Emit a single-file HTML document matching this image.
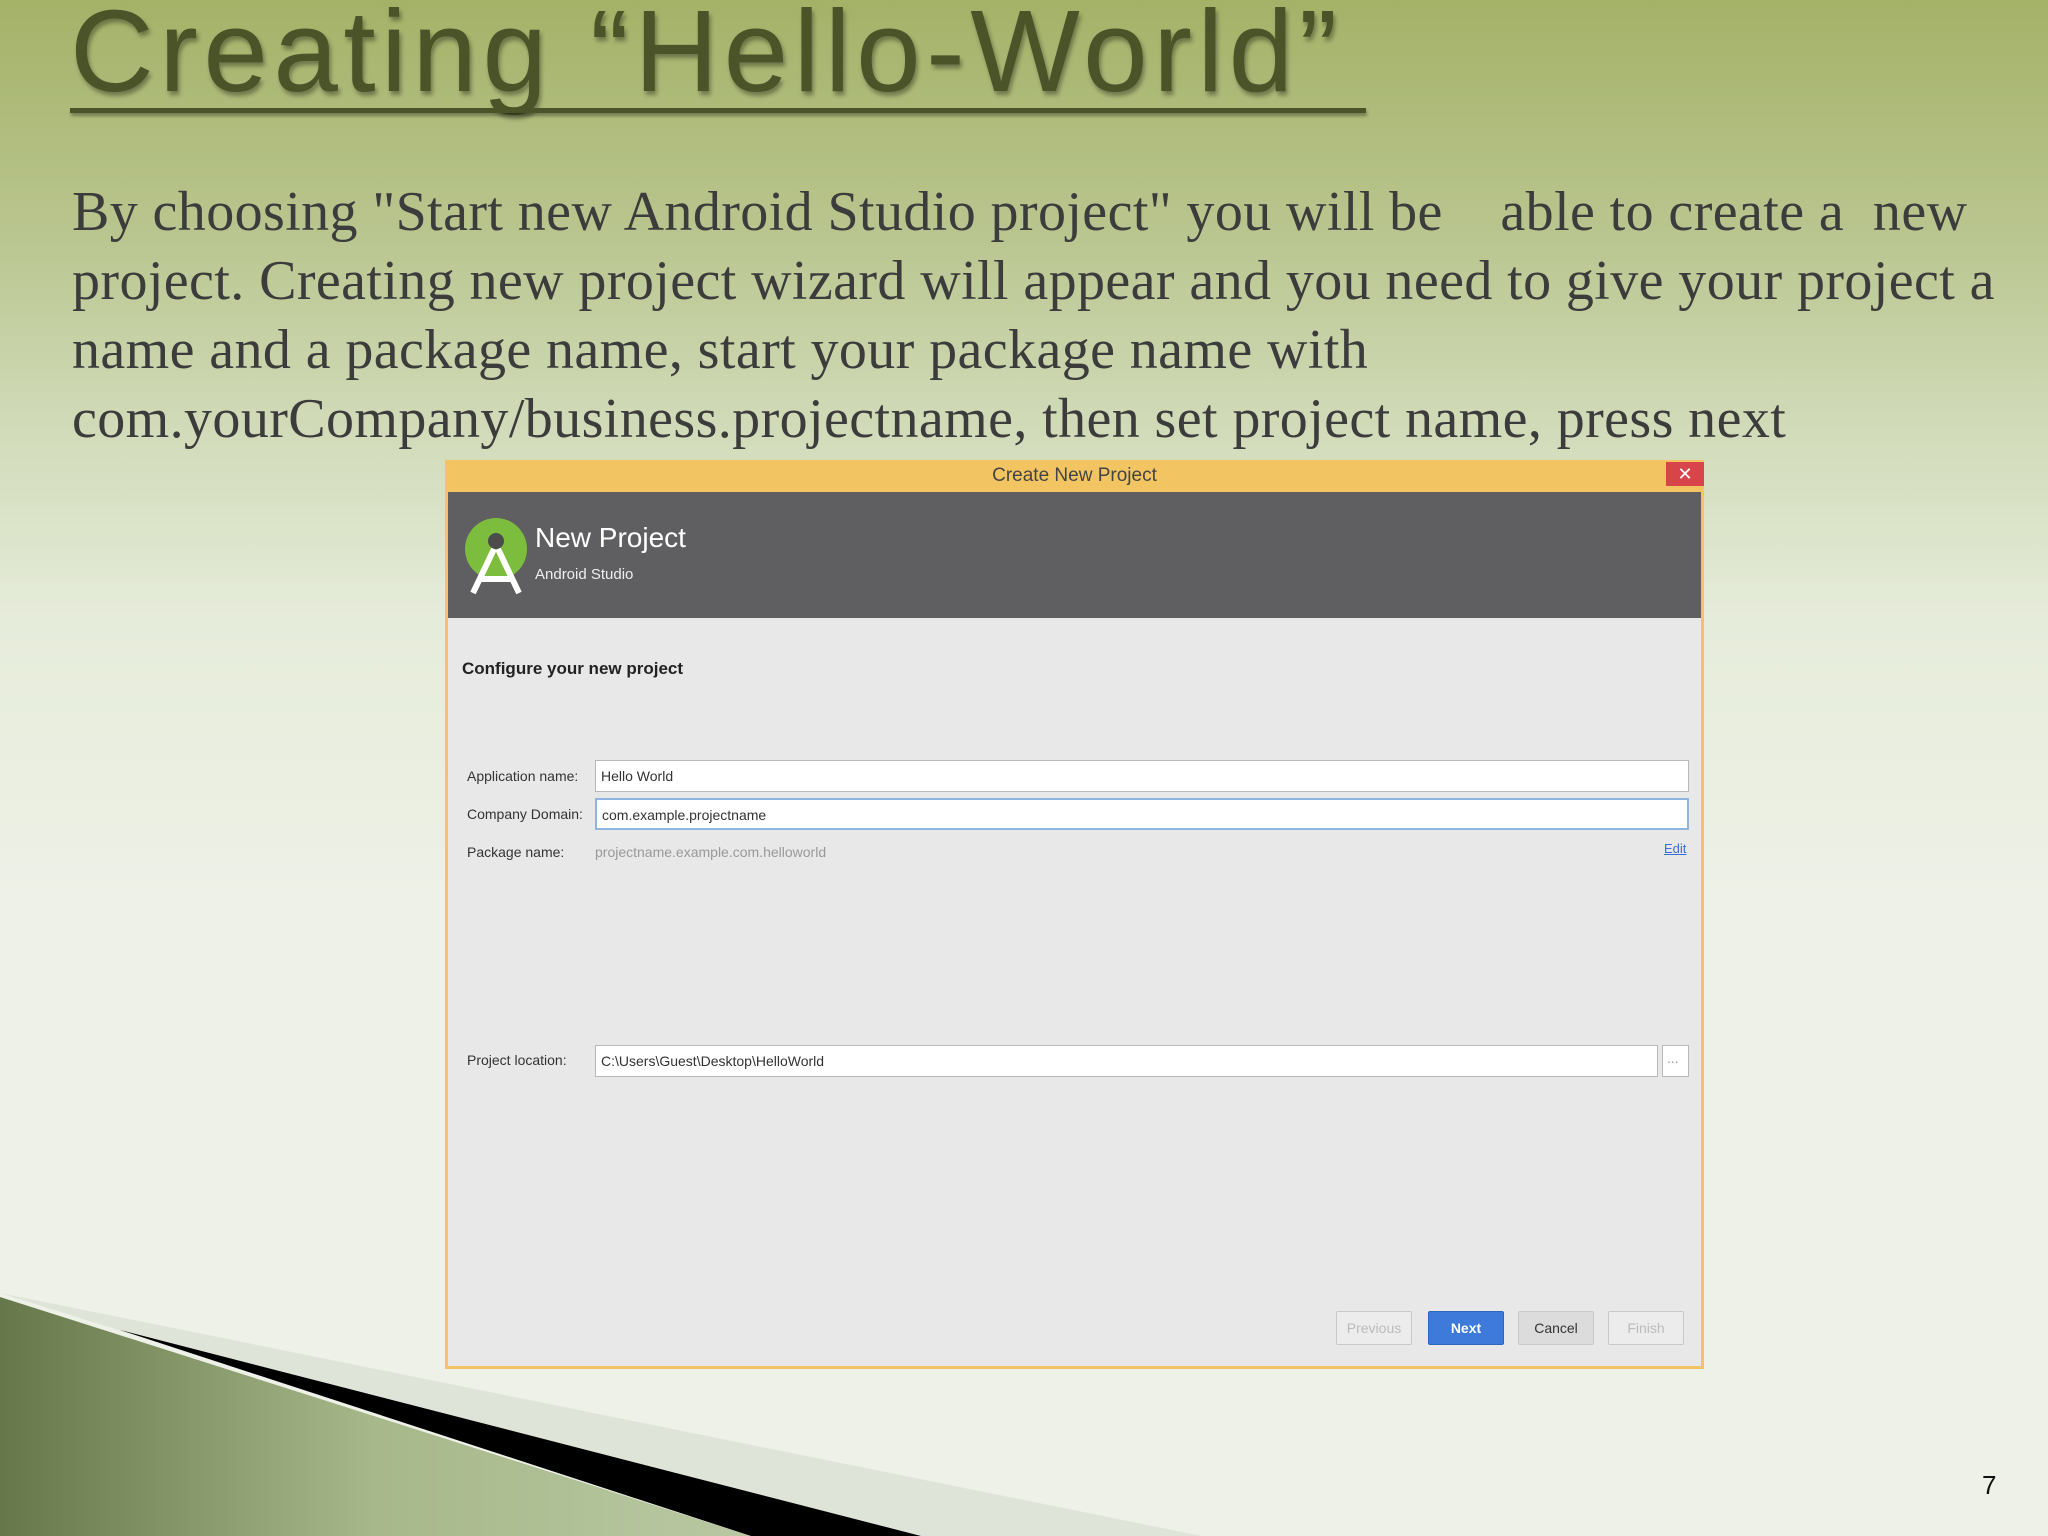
<!DOCTYPE html>
<html><head><meta charset="utf-8"><style>
*{margin:0;padding:0;box-sizing:border-box}
body{width:2048px;height:1536px;overflow:hidden;position:relative;
background:linear-gradient(180deg,#a4b268 0px,#b9c58e 230px,#d0dab7 420px,#e6ecda 620px,#eef1e7 900px,#eef1e8 1536px);font-family:"Liberation Sans",sans-serif}
.title{position:absolute;left:70px;top:-16px;font-family:"Liberation Sans",sans-serif;font-size:116px;color:#4a5428;letter-spacing:5.5px;text-shadow:2px 4px 4px rgba(0,0,0,.35);white-space:nowrap}
.uline{position:absolute;left:70px;top:108px;width:1296px;height:5px;background:#4a5428;box-shadow:1px 3px 3px rgba(0,0,0,.35)}
.body{position:absolute;left:72px;top:178px;font-family:"Liberation Serif",serif;font-size:56px;letter-spacing:0.4px;line-height:69px;color:#3c3c3c;white-space:nowrap}
.dlg{position:absolute;left:445px;top:460px;width:1259px;height:909px;background:#e8e8e8;border:3px solid #f3c462;border-top:none}
.tb{position:absolute;left:-3px;top:0;width:1259px;height:32px;background:#f3c462}
.tb span{position:absolute;left:0;right:0;text-align:center;top:5px;font-size:19px;color:#444}
.cls{position:absolute;right:0;top:2px;width:38px;height:24px;background:#d9434a;color:#fff;text-align:center;font-size:18px;line-height:24px}
.hd{position:absolute;left:0;top:32px;right:0;height:126px;background:#5f5f61}
.lbl{position:absolute;font-size:14px;color:#333}
.fld{position:absolute;left:147px;height:32px;background:#fff;border:1px solid #b8b8b8;font-size:14px;color:#333;padding:7px 5px}
.btn{position:absolute;top:851px;width:76px;height:34px;border:1px solid #c8c8c8;background:#ececec;font-size:14px;color:#bbb;text-align:center;line-height:32px;border-radius:2px}
</style></head><body>
<div class="title">Creating “Hello-World”</div>
<div class="uline"></div>
<div class="body">By choosing "Start new Android Studio project" you will be &nbsp;&nbsp; able to create a &nbsp;new<br>project. Creating new project wizard will appear and you need to give your project a<br>name and a package name, start your package name with<br>com.yourCompany/business.projectname, then set project name, press next</div>

<div class="dlg">
 <div class="tb"><span>Create New Project</span><div class="cls">✕</div></div>
 <div class="hd">
  <svg style="position:absolute;left:17px;top:25px" width="66" height="78" viewBox="0 0 66 78"><circle cx="31" cy="32" r="31" fill="#7cbd3e"/><circle cx="31" cy="24" r="8" fill="#4c4c4c"/><path d="M8 76 L29 32 M54 76 L33 32 M14 62 L48 62" stroke="#fff" stroke-width="6" fill="none"/></svg>
  <div style="position:absolute;left:87px;top:30px;font-size:28px;color:#fff">New Project</div>
  <div style="position:absolute;left:87px;top:74px;font-size:15px;color:#eee">Android Studio</div>
 </div>
 <div style="position:absolute;left:14px;top:199px;font-size:17px;font-weight:bold;color:#222">Configure your new project</div>
 <div class="lbl" style="left:19px;top:308px">Application name:</div>
 <div class="fld" style="top:300px;width:1094px">Hello World</div>
 <div class="lbl" style="left:19px;top:346px">Company Domain:</div>
 <div class="fld" style="top:338px;width:1094px;border:2px solid #8fb4de">com.example.projectname</div>
 <div class="lbl" style="left:19px;top:384px">Package name:</div>
 <div class="lbl" style="left:147px;top:384px;color:#999">projectname.example.com.helloworld</div>
 <div class="lbl" style="left:1216px;top:381px;color:#3a6fd8;font-size:13px;text-decoration:underline">Edit</div>
 <div class="lbl" style="left:19px;top:592px">Project location:</div>
 <div class="fld" style="top:585px;width:1063px">C:\Users\Guest\Desktop\HelloWorld</div>
 <div class="fld" style="top:585px;left:1214px;width:27px;color:#999;padding:4px">...</div>
 <div class="btn" style="left:888px">Previous</div>
 <div class="btn" style="left:980px;background:#3d7ad9;border-color:#2f66c0;color:#fff;font-weight:bold">Next</div>
 <div class="btn" style="left:1070px;background:#dcdcdc;color:#333">Cancel</div>
 <div class="btn" style="left:1160px">Finish</div>
</div>

<svg style="position:absolute;left:0;top:0" width="2048" height="1536">
 <defs><linearGradient id="g" x1="0" y1="0" x2="1" y2="0"><stop offset="0" stop-color="#66784a"/><stop offset=".5" stop-color="#a7b88a"/><stop offset="1" stop-color="#b9c8a2"/></linearGradient></defs>
 <polygon points="0,1293 1202,1536 921,1536 150,1340" fill="#dfe4d8"/>
 <polygon points="0,1297 751,1536 0,1536" fill="url(#g)"/>
 <polygon points="120,1330 921,1536 751,1536" fill="#000"/>
</svg>
<div style="position:absolute;left:1982px;top:1470px;font-size:26px;color:#111">7</div>
</body></html>
